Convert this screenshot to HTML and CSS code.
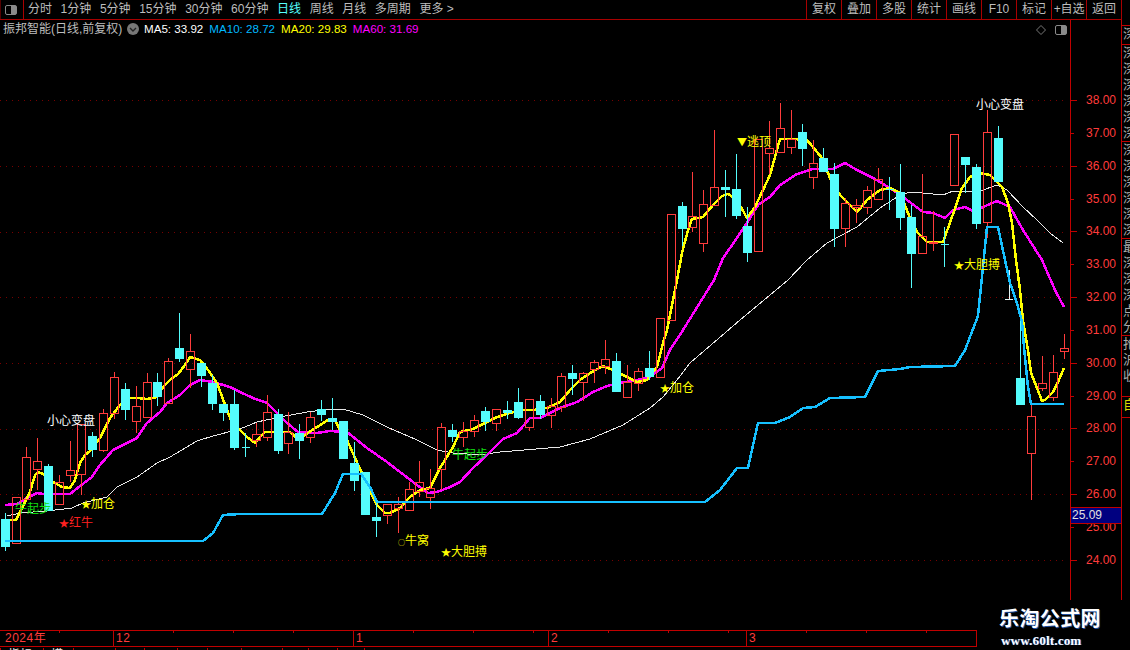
FILE: index.html
```html
<!DOCTYPE html>
<html lang="zh">
<head>
<meta charset="utf-8">
<title>振邦智能 日线</title>
<link rel="stylesheet" href="styles.css">
</head>
<body>
<header class="topbar">
  <div class="panel-toggle"><span class="toggle-icon"></span></div>
  <nav class="periods">
    <span>分时</span><span>1分钟</span><span>5分钟</span><span>15分钟</span><span>30分钟</span><span>60分钟</span><span class="active">日线</span><span>周线</span><span>月线</span><span>多周期</span><span>更多 &gt;</span>
  </nav>
  <nav class="tools">
    <span>复权</span><span>叠加</span><span>多股</span><span>统计</span><span>画线</span><span>F10</span><span>标记</span><span>+自选</span><span>返回</span>
  </nav>
</header>

<main class="main">
  <section class="chart">
    <div class="legend">
      <span class="stock">振邦智能(日线,前复权)</span>
      <span class="chev"><svg width="12" height="12" viewBox="0 0 12 12"><circle cx="6" cy="6" r="6" fill="#777"/><path d="M3 5l3 3 3-3" fill="none" stroke="#222" stroke-width="1.4"/></svg></span>
      <span class="ma5">MA5: 33.92</span>
      <span class="ma10">MA10: 28.72</span>
      <span class="ma20">MA20: 29.83</span>
      <span class="ma60">MA60: 31.69</span>
    </div>
    <div class="chart-icons">
      <svg width="10" height="10" viewBox="0 0 10 10"><path d="M5 .5L9.5 5 5 9.5.5 5z" fill="none" stroke="#777"/></svg>
      <span class="toggle-icon"></span>
    </div>
    <svg class="plot" width="1070" height="580" viewBox="0 20 1070 580">
      <path class="grid" d="M0 100.5H1068M0 166.5H1068M0 232.5H1068M0 297.5H1068M0 363.5H1068M0 429.5H1068M0 494.5H1068M0 560.5H1068"/>

      <polyline class="thin" points="7,516 20,513 47,511 72,508 83,503 107,497 117,487 137,477 157,463 170,457 197,441 213,436 240,429 257,422 280,417 307,412 330,409 343,409 363,415 387,427 417,440 437,450 453,453 480,455 500,452 560,447 590,439 623,425 650,408 663,397 677,380 690,363 740,320 788,280 807,260 827,243 857,227 880,208 897,197 910,192 933,194 943,195 953,191 980,191 997,185 1007,190 1023,207 1037,220 1050,233 1063,243"/>
      <polyline class="line magenta" points="5,505 17,504 27,498 37,493 43,494 70,494 80,486 92,477 100,465 113,450 123,445 137,438 147,423 160,412 167,403 180,395 190,385 200,380 213,382 230,387 240,392 253,398 267,403 277,413 287,423 298,432 317,433 330,431 347,432 357,440 367,448 387,462 400,472 417,485 428,493 437,492 450,487 460,482 473,468 487,455 503,439 517,433 530,418 540,418 560,408 577,402 593,392 607,386 620,383 637,380 650,377 662,368 670,350 683,330 714,280 723,258 737,238 747,223 758,205 770,197 780,185 797,174 813,169 833,169 845,163 857,170 873,178 880,182 893,190 907,200 923,212 933,213 945,218 953,210 965,207 973,211 983,207 997,201 1010,207 1023,230 1042,260 1055,290 1064,307"/>
      <polyline class="line yellow" points="10,520 16,520 22,508 30,492 35,475 38,472 43,474 53,482 62,487 70,488 75,480 80,463 85,455 90,451 100,438 110,418 120,405 130,398 137,398 147,399 157,397 163,387 170,380 178,374 185,365 190,357 200,360 208,370 217,383 227,410 233,425 240,430 247,437 255,443 262,435 265,432 277,432 290,432 298,439 305,435 317,427 328,420 335,420 340,430 347,440 355,458 362,473 368,487 377,505 385,513 390,513 400,508 410,497 420,490 430,488 440,468 453,447 460,432 473,429 487,422 497,417 510,413 523,410 533,410 547,408 560,402 570,390 580,380 590,373 603,366 613,370 623,375 637,382 647,380 657,367 663,343 667,330 677,280 682,253 688,230 692,219 703,217 713,205 722,196 728,194 737,200 747,218 755,207 763,190 770,175 775,157 780,139 793,139 807,140 822,158 830,178 840,195 857,212 867,200 880,190 890,188 900,193 910,218 917,232 927,242 943,242 952,217 962,188 970,177 980,173 990,175 1002,187 1008,203 1012,223 1016,260 1020,290 1023,320 1028,350 1031,373 1037,388 1042,401 1045,400 1053,392 1058,382 1064,368"/>

      <path class="up" d="M12.5 497.5h8v46h-8z
M22.5 457.5h8v42h-8zM26.5 447V457
M33.5 461.5h8v8h-8zM37.5 438V461M37.5 470V490
M55.5 482.5h8v22h-8zM59.5 475V482
M66.5 470.5h8v5h-8zM70.5 441V470M70.5 476V482
M77.5 424.5h8v50h-8zM81.5 475V495
M99.5 413.5h8v37h-8zM103.5 409V413M103.5 451V452
M110.5 377.5h8v36h-8zM114.5 372V377M114.5 414V419
M132.5 406.5h8v15h-8zM136.5 386V406M136.5 422V433
M143.5 382.5h8v35h-8zM147.5 373V382
M164.5 361.5h8v42h-8zM168.5 358V361
M186.5 351.5h8v18h-8zM190.5 334V351M190.5 370V388
M252.5 434.5h8v6h-8zM256.5 423V434M256.5 441V447
M263.5 412.5h8v25h-8zM267.5 395V412M267.5 438V441
M284.5 432.5h8v11h-8zM288.5 412V432M288.5 444V454
M306.5 417.5h8v20h-8zM310.5 412V417M310.5 438V443
M383.5 504.5h8v11h-8zM387.5 516V524
M394.5 504.5h8v4h-8zM398.5 497V504M398.5 509V533
M405.5 489.5h8v21h-8zM409.5 482V489
M415.5 482.5h8v9h-8zM419.5 461V482M419.5 492V497
M426.5 488.5h8v9h-8zM430.5 469V488M430.5 498V509
M437.5 427.5h8v42h-8zM441.5 423V427M441.5 470V490
M459.5 431.5h8v6h-8zM463.5 422V431M463.5 438V447
M470.5 420.5h8v11h-8zM474.5 415V420M474.5 432V437
M492.5 409.5h8v14h-8zM496.5 424V431
M525.5 399.5h8v28h-8zM529.5 428V431
M547.5 406.5h8v9h-8zM551.5 398V406M551.5 416V428
M557.5 376.5h8v31h-8zM561.5 373V376M561.5 408V412
M579.5 373.5h8v9h-8zM583.5 372V373M583.5 383V401
M590.5 362.5h8v7h-8zM594.5 360V362M594.5 370V383
M601.5 359.5h8v7h-8zM605.5 340V359M605.5 367V374
M623.5 382.5h8v15h-8zM627.5 365V382
M634.5 371.5h8v12h-8zM638.5 368V371M638.5 384V391
M656.5 318.5h8v59h-8z
M667.5 214.5h8v106h-8z
M688.5 216.5h8v11h-8zM692.5 172V216M692.5 228V232
M699.5 204.5h8v39h-8zM703.5 190V204M703.5 244V252
M710.5 187.5h8v18h-8zM714.5 130V187
M754.5 139.5h8v112h-8z
M765.5 148.5h8v5h-8zM769.5 121V148M769.5 154V174
M776.5 128.5h8v24h-8zM780.5 103V128
M787.5 139.5h8v8h-8zM791.5 110V139M791.5 148V154
M809.5 163.5h8v14h-8zM813.5 140V163M813.5 178V189
M841.5 203.5h8v25h-8zM845.5 198V203M845.5 229V247
M852.5 205.5h8v2h-8zM856.5 199V205M856.5 208V223
M863.5 190.5h8v17h-8zM867.5 186V190M867.5 208V214
M874.5 179.5h8v20h-8zM878.5 168V179
M918.5 236.5h8v17h-8zM922.5 174V236
M929.5 242.5h8v1h-8zM933.5 211V242M933.5 244V251
M950.5 134.5h8v51h-8z
M983.5 132.5h8v90h-8zM987.5 110V132M987.5 223V238
M1027.5 416.5h8v37h-8zM1031.5 405V416M1031.5 454V500
M1038.5 383.5h8v5h-8zM1042.5 356V383M1042.5 389V391
M1049.5 372.5h8v25h-8zM1053.5 355V372M1053.5 398V401
M1060.5 348.5h8v3h-8zM1064.5 334V348M1064.5 352V359"/>
      <path class="down" d="M1.5 519.5h8v27h-8zM5.5 513V519M5.5 546V551
M44.5 466.5h8v44h-8zM48.5 464V466
M88.5 436.5h8v13h-8zM92.5 432V436M92.5 449V457
M121.5 389.5h8v20h-8zM125.5 383V389M125.5 409V420
M153.5 382.5h8v14h-8zM157.5 373V382M157.5 396V406
M175.5 348.5h8v10h-8zM179.5 313V348M179.5 358V362
M197.5 363.5h8v12h-8zM201.5 375V387
M208.5 383.5h8v20h-8zM212.5 375V383M212.5 403V410
M219.5 404.5h8v8h-8zM223.5 412V421
M230.5 404.5h8v43h-8zM234.5 390V404M234.5 447V450
M241.5 447.5h8M245.5 433V457
M274.5 414.5h8v36h-8zM278.5 409V414M278.5 450V454
M295.5 433.5h8v7h-8zM299.5 424V433M299.5 440V459
M317.5 409.5h8v5h-8zM321.5 400V409M321.5 414V421
M328.5 418.5h8v3h-8zM332.5 398V418M332.5 421V430
M339.5 421.5h8v37h-8zM343.5 458V459
M350.5 463.5h8v17h-8zM354.5 442V463M354.5 480V491
M361.5 472.5h8v42h-8zM365.5 514V515
M372.5 517.5h8v3h-8zM376.5 500V517M376.5 520V537
M448.5 430.5h8v6h-8zM452.5 424V430M452.5 436V442
M481.5 411.5h8v10h-8zM485.5 407V411M485.5 421V431
M503.5 410.5h8v2h-8zM507.5 401V410M507.5 412V419
M514.5 402.5h8v15h-8zM518.5 388V402M518.5 417V419
M536.5 401.5h8v13h-8zM540.5 395V401M540.5 414V419
M568.5 373.5h8v5h-8zM572.5 365V373M572.5 378V395
M612.5 361.5h8v30h-8zM616.5 353V361
M645.5 368.5h8v8h-8zM649.5 351V368M649.5 376V380
M678.5 206.5h8v22h-8zM682.5 202V206M682.5 228V246
M721.5 187.5h8v2h-8zM725.5 170V187M725.5 189V217
M732.5 189.5h8v26h-8zM736.5 154V189M736.5 215V219
M743.5 226.5h8v26h-8zM747.5 207V226M747.5 252V262
M798.5 132.5h8v16h-8zM802.5 124V132M802.5 148V166
M819.5 158.5h8v13h-8zM823.5 148V158
M830.5 174.5h8v54h-8zM834.5 163V174M834.5 228V247
M885.5 189.5h8M889.5 177V210
M896.5 192.5h8v25h-8zM900.5 164V192M900.5 217V230
M907.5 217.5h8v36h-8zM911.5 205V217M911.5 253V288
M940.5 244.5h8M944.5 227V267
M961.5 157.5h8v7h-8zM965.5 164V193
M972.5 167.5h8v56h-8zM976.5 164V167M976.5 223V229
M994.5 138.5h8v43h-8zM998.5 126V138
M1016.5 378.5h8v26h-8zM1020.5 320V378"/>
      <path class="flat" d="M1005 299.5h8M1009.5 270V299"/>
      <polyline class="line blue" points="5,541 203,541 213,533 223,515 240,514 322,514 335,493 343,474 361,474 370,487 377,502 705,502 720,490 737,468 748,468 758,423 775,423 790,417 803,408 815,407 830,398 865,397 878,371 900,369 910,367 955,366 965,350 978,316 987,227 998,227 1005,260 1010,283 1017,303 1022,322 1024,347 1028,387 1031,404 1064,404"/>

      <g class="labels">
        <text class="white" x="47" y="425">小心变盘</text>
        <text class="white" x="976" y="109">小心变盘</text>
        <text class="green" x="15" y="513">牛起步</text>
        <text class="green" x="452" y="459">牛起步</text>
        <text class="gold" x="81" y="508"><tspan class="star">★</tspan>加仓</text>
        <text class="red" x="59" y="527"><tspan class="star">★</tspan>红牛</text>
        <text class="gold" x="660" y="392"><tspan class="star">★</tspan>加仓</text>
        <text class="gold" x="737" y="146"><tspan class="star">▼</tspan>逃顶</text>
        <text class="gold" x="398" y="545"><tspan class="dot">○</tspan>牛窝</text>
        <text class="gold" x="441" y="556"><tspan class="star">★</tspan>大胆搏</text>
        <text class="gold" x="954" y="269"><tspan class="star">★</tspan>大胆搏</text>
      </g>
    </svg>
  </section>

  <ul class="y-axis">
    <li>38.00</li>
    <li class="short">37.00</li>
    <li>36.00</li>
    <li class="short">35.00</li>
    <li>34.00</li>
    <li class="short">33.00</li>
    <li>32.00</li>
    <li class="short">31.00</li>
    <li>30.00</li>
    <li class="short">29.00</li>
    <li>28.00</li>
    <li class="short">27.00</li>
    <li>26.00</li>
    <li class="short">25.00</li>
    <li>24.00</li>
    <li class="price-tag">25.09</li>
  </ul>

  <aside class="side">
    <div class="side-row first">深</div>
    <div class="side-row">深<br>深<br>深<br>深<br>深<br>深</div>
    <div class="side-row">深<br>深<br>深<br>深<br>深<br>深</div>
    <div class="side-row">最<br>深<br>深<br>深<br>点<br>分</div>
    <div class="side-row">抢<br>沪<br>收</div>
    <div class="side-row self">自</div>
  </aside>
</main>

<div class="dates">
  <span class="d-year">2024年</span>
  <span class="d-12">12</span>
  <span class="d-1">1</span>
  <span class="d-2">2</span>
  <span class="d-3">3</span>
</div>
<div class="tabs">
  <span class="w43">指标</span><span class="w30">模板</span><span class="w42"></span><span class="w29"></span><span class="w33"></span><span class="w30"></span><span class="w34"></span><span class="w41"></span><span class="w26"></span><span class="w29"></span><span class="w27"></span><span class="w32"></span>
</div>

<div class="watermark">
  <div class="wm-cn">乐淘公式网</div>
  <div class="wm-url">www.60lt.com</div>
</div>
</body>
</html>
```

FILE: styles.css
```css
* { box-sizing: border-box; }
html, body { margin: 0; padding: 0; }
body {
  width: 1130px;
  height: 650px;
  overflow: hidden;
  position: relative;
  background: #000;
  color: #bdbdbd;
  font: 12px/16px "Liberation Sans", "Noto Sans CJK SC", sans-serif;
}

/* top bar */
.topbar {
  display: flex;
  height: 20px;
  width: 1122px;
  border-bottom: 1px solid #a80000;
}
.panel-toggle {
  width: 24px;
  border-right: 1px solid #a80000;
  border-left: 1px solid #500;
  display: flex;
  align-items: center;
  padding-left: 4px;
}
.toggle-icon {
  display: block;
  width: 12px;
  height: 10px;
  border: 1px solid #8a8a8a;
  border-radius: 2px;
  background: linear-gradient(to right, #000 50%, #8a8a8a 50%);
}
.periods {
  display: flex;
  gap: 8.6px;
  padding-left: 4px;
  line-height: 19px;
}
.periods span { white-space: nowrap; }
.periods .active { color: #5ff; }
.tools { display: flex; margin-left: auto; height: 19px; border-right: 1px solid #a80000; }
.tools span {
  width: 35px;
  border-left: 1px solid #a80000;
  text-align: center;
  line-height: 19px;
  white-space: nowrap;
  letter-spacing: -.1px;
}

/* main */
.main { display: flex; height: 580px; }
.chart { position: relative; width: 1070px; height: 580px; }
.plot { display: block; }
.legend {
  position: absolute;
  left: 3px;
  top: 1px;
  display: flex;
  align-items: center;
  white-space: nowrap;
}
.stock { width: 124px; }
.chev { width: 17px; height: 12px; display: block; }
.chev svg { display: block; }
.ma5, .ma10, .ma20, .ma60 { font-size: 11.6px; margin-right: 6px; }
.ma5 { color: #fff; }
.ma10 { color: #00b8ff; }
.ma20 { color: #ff0; }
.ma60 { color: #f0f; }
.chart-icons {
  position: absolute;
  right: 3px;
  top: 5px;
  display: flex;
  align-items: center;
  gap: 9px;
}

.grid { stroke: #780000; stroke-width: 1; stroke-dasharray: 1 5; fill: none; }
.line { fill: none; stroke-width: 2.5; stroke-linejoin: round; shape-rendering: crispEdges; }
.blue { stroke: #16c0ff; }
.magenta { stroke: #f0f; }
.yellow { stroke: #ff0; }
.thin { fill: none; stroke: #e8e8e8; stroke-width: 1; shape-rendering: crispEdges; }
.up { fill: none; stroke: #ff3c3c; stroke-width: 1; shape-rendering: crispEdges; }
.down { fill: #54fcfc; stroke: #54fcfc; stroke-width: 1; shape-rendering: crispEdges; }
.flat { fill: none; stroke: #e4f4f4; stroke-width: 1; shape-rendering: crispEdges; }
.labels text { font: 12px "Noto Sans CJK SC", sans-serif; }
.labels .star { font-size: 10px; }
.labels .dot { font-size: 7px; }
.white { fill: #fff; }
.green { fill: #12e012; }
.gold { fill: #ff0; }
.red { fill: #ff2020; }

/* price axis */
.y-axis {
  position: relative;
  list-style: none;
  margin: 0;
  padding: 64px 0 0;
  width: 51px;
  height: 580px;
  border-left: 1px solid #c00000;
  color: #ff3c3c;
}
.y-axis li {
  position: relative;
  height: 32.85px;
  line-height: 32.85px;
  padding-left: 15px;
}
.y-axis li::before {
  content: "";
  position: absolute;
  left: 0;
  top: 16px;
  width: 6px;
  height: 1px;
  background: #c00000;
}
.y-axis li.short::before { width: 3px; }
.y-axis .price-tag {
  position: absolute;
  left: 0;
  top: 487px;
  width: 50px;
  height: 17px;
  line-height: 15px;
  padding-left: 1px;
  background: #000080;
  border-top: 1px solid #c00000;
  border-bottom: 1px solid #c00000;
  color: #e0e0e0;
}
.y-axis .price-tag::before { display: none; }

/* side strip */
.side {
  width: 9px;
  height: 580px;
  border-left: 1px solid #c00000;
  padding-top: 5px;
  overflow: hidden;
  font-size: 13px;
  line-height: 16px;
  color: #aaa;
}
.side-row {
  height: 97px;
  width: 8px;
  overflow: hidden;
  border-bottom: 1px solid #c00000;
  padding-left: 1px;
}
.side-row.first { height: 20px; border-top: 1px solid #c00000; }
.side-row:nth-child(5) { height: 61px; }
.side-row.self { height: 21px; color: #d8d800; }

/* date axis */
.dates {
  display: flex;
  width: 977px;
  height: 17px;
  margin-top: 30px;
  border-top: 1px solid #c00000;
  border-bottom: 1px solid #c00000;
  border-right: 1px solid #c00000;
  color: #ff3c3c;
  font-size: 12px;
  line-height: 15px;
}
.dates span {
  padding-left: 2px;
  letter-spacing: .5px;
  border-right: 1px solid #c00000;
  background: repeating-linear-gradient(to right, transparent 0 59px, #c00000 59px 60px) top left / 100% 2px no-repeat;
}
.d-year { width: 114px; padding-left: 5px !important; }
.d-12 { width: 240px; }
.d-1 { width: 195px; }
.d-2 { width: 198px; }
.d-3 { width: 229px; border-right: 0 !important; }

/* clipped tab row */
.tabs { display: flex; height: 3px; overflow: hidden; color: #eee; line-height: 14px; padding-top: 1px; }
.tabs span { border-left: 1px solid #c00000; padding-left: 7px; }
.w43 { width: 43px; } .w30 { width: 30px; } .w42 { width: 42px; } .w29 { width: 29px; }
.w33 { width: 33px; } .w34 { width: 34px; } .w41 { width: 41px; } .w26 { width: 26px; }
.w27 { width: 27px; } .w32 { width: 32px; }

/* watermark */
.watermark {
  position: absolute;
  left: 978px;
  top: 600px;
  width: 152px;
  height: 50px;
  padding: 6px 0 0 21px;
  background: #000;
  color: #fff;
}
.wm-cn {
  font: bold 20px/24px "Noto Sans CJK SC", sans-serif;
  letter-spacing: .4px;
  text-shadow: 1px 1px 0 #1f4f9f;
}
.wm-url {
  font: bold 13px/15px "Liberation Serif", serif;
  letter-spacing: .2px;
  margin: 3px 0 0 2px;
  text-shadow: 1px 0 0 #1f4f9f;
}
```
